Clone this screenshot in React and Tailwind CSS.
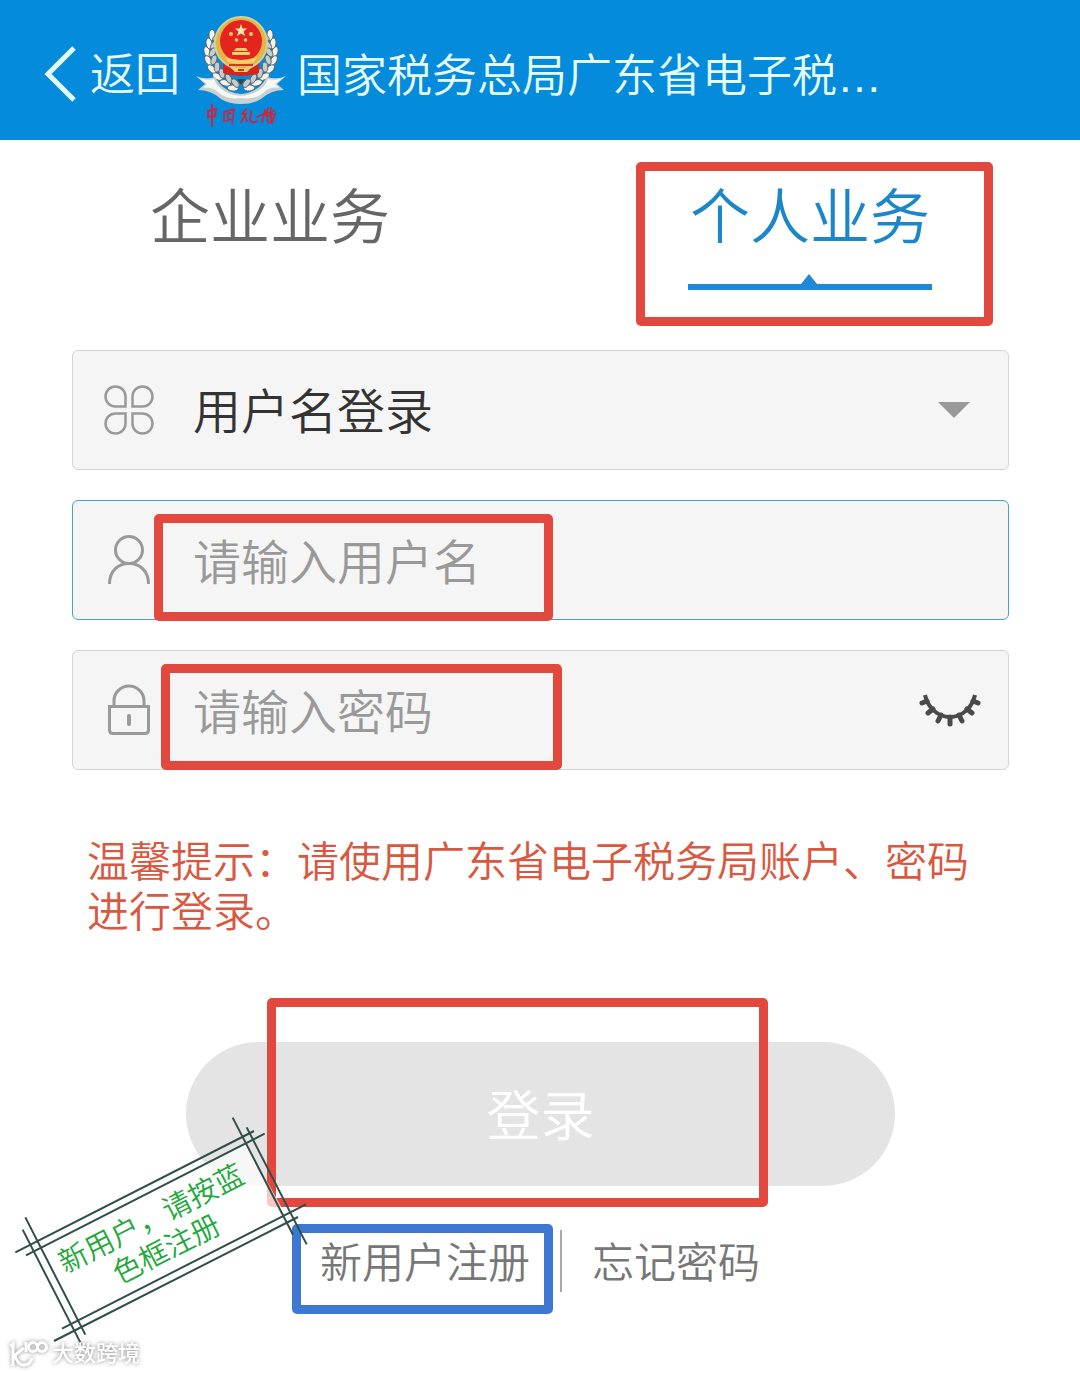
import React, { useState } from 'react';

// highlight frame drawn over the control it points at
function Mark({ className }) {
  return <span aria-hidden="true" className={`pointer-events-none absolute rounded-[5px] border-[9px] ${className}`} />;
}

const LEAVES = [
  [20, 20, 25], [17, 28, 14], [15, 36, 4], [16, 44, -8], [19, 52, -22], [24, 59, -36], [31, 65, -50], [38, 70, -62],
];

function Emblem() {
  return (
    <svg viewBox="0 0 92 116" className="h-[116px] w-[92px] shrink-0" role="img" aria-label="中国税务">
      {[false, true].map((flip) => (
        <g key={String(flip)} transform={flip ? 'translate(92 0) scale(-1 1)' : undefined}>
          {LEAVES.map(([x, y, r]) => (
            <g key={y} transform={`translate(${x} ${y}) rotate(${r})`} stroke="#4e5b63" strokeWidth="0.8">
              <ellipse cx="-3" rx="3" ry="5.5" fill="#f4f4ee" transform="rotate(-24)" />
              <ellipse cx="3" rx="2.8" ry="5" fill="#c8ccc9" transform="rotate(24)" />
            </g>
          ))}
          <path
            d="M1 61 Q10 65 20 62 L24 68 Q32 78 46 79 V89 Q34 89 26 84 Q16 75 3 75 L10 69 Z"
            fill="#c9d0d0"
          />
          <path d="M4 63 Q12 66 19 64 L22 70 Q31 80 46 81 V83 Q32 85 24 78 Q16 71 8 73 L12 69 Z" fill="#f6f8f6" />
        </g>
      ))}
      <path d="M28 46 H64 V58 Q46 64 28 58 Z" fill="#d8241c" />
      <circle cx="46" cy="28" r="26" fill="#e4b445" stroke="#d3cf9e" strokeWidth="2" />
      <circle cx="46" cy="26" r="21" fill="#e4241f" />
      <path d="M46 9 L47.500 13.500 H52 L48.500 16.500 L50 21 L46 18.500 L42 21 L43.500 16.500 L40 13.500 H44.500 Z" fill="#fbe9b0" />
      <g fill="#f6cf6a">
        <circle cx="36" cy="19" r="2" />
        <circle cx="56" cy="19" r="2" />
        <circle cx="41.500" cy="25" r="1.800" />
        <circle cx="50.500" cy="25" r="1.800" />
        <path d="M41 33 H51 L53 36 H39 Z M37 37 H55 V40 H37 Z M30 42 Q46 48 62 42 L59 47 Q46 51 33 47 Z" />
        <path d="M36 53 H56 L52 57 H40 Z" />
      </g>
      <path d="M34 50 L58 50 M43 55 H49" stroke="#c93c1e" strokeWidth="2" />
      <path d="M42 64 L46 70 L50 64 Z" fill="#34464f" />
      <g fill="none" stroke="#cf2439" strokeWidth="2" strokeLinecap="round">
        <path d="M13 96 L21 94 L20 101 L13 102 Z M17 90 V111" />
        <path d="M29 97 V107 M29 97 L39 94 L37 109 M32 99 L36 98 M33 98 V105 M31 106 L37 104" strokeWidth="1.600" />
        <path d="M51 94 L47 99 L51 99 L46 107 M50 101 L52 106 M56 96 L55 105 Q57 109 62 106" strokeWidth="1.800" />
        <path d="M62 102 L68 99 M70 95 L67 107 M73 93 L71 99 L79 96 M72 101 L80 99 L77 108 L73 107 Z M76 93 V106" strokeWidth="1.800" />
      </g>
    </svg>
  );
}

function CloverIcon() {
  return (
    <svg viewBox="0 0 50 50" className="size-[50px]" fill="none" stroke="#999" strokeWidth="2.500" aria-hidden="true">
      {[0, 90, 180, 270].map((a) => (
        <path key={a} transform={`rotate(${a} 25 25)`} d="M21.500 21.500 H11.500 A10 10 0 1 1 21.500 11.500 Z" />
      ))}
    </svg>
  );
}

function UserIcon() {
  return (
    <svg viewBox="0 0 50 50" className="size-[50px]" fill="none" stroke="#999" strokeWidth="3" aria-hidden="true">
      <circle cx="25" cy="15" r="13.500" />
      <path d="M5.500 49 C5.500 36 14 28.500 25 28.500 C36 28.500 44.500 36 44.500 49" />
    </svg>
  );
}

function LockIcon() {
  return (
    <svg viewBox="0 0 50 52" className="h-[52px] w-[50px]" fill="none" stroke="#999" strokeWidth="3" aria-hidden="true">
      <path d="M10 22 V17 A15 15 0 0 1 40 17 V22" />
      <path d="M5.500 22.500 H44.500 V46 Q44.500 49.500 41 49.500 H9 Q5.500 49.500 5.500 46 Z" />
      <path d="M25 32 V40" strokeWidth="4" strokeLinecap="round" />
    </svg>
  );
}

function ClosedEyeIcon() {
  return (
    <svg viewBox="0 0 62 34" className="h-[34px] w-[62px]" fill="none" stroke="#4a4a4a" strokeWidth="4" aria-hidden="true">
      <path d="M6 2 C9 15 19 24 31 24 C43 24 53 15 56 2" />
      <path
        d="M8 8 L3 10 M14 16 L9 20 M22 22 L19 28 M31 24 V31 M40 22 L43 28 M48 16 L53 20 M54 8 L59 10"
        strokeWidth="5"
        strokeLinecap="round"
      />
    </svg>
  );
}

function Stamp() {
  return (
    <div className="pointer-events-none absolute bottom-0 left-0 h-[273px] w-[330px]">
      <svg viewBox="0 0 990 819" className="absolute inset-0 size-full" aria-hidden="true">
        <path d="M120 447 L738 130 L856 343 L232 663 Z" fill="#fff" fillOpacity="0.700" />
        <path
          d="M46 457 L762 93 M78 466 L794 101 M186 686 L918 313 M162 723 L894 351 M76 352 L256 704 M68 389 L247 739 M698 53 L879 404 M740 82 L920 433"
          stroke="#2f4f48"
          strokeWidth="6"
        />
      </svg>
      <p className="absolute top-[100px] left-[55px] w-[208px] -rotate-27 text-center text-[29px] leading-[34px] text-[#22a83c]">
        新用户，请按蓝色框注册
      </p>
    </div>
  );
}

function Watermark() {
  return (
    <div className="pointer-events-none absolute bottom-[4px] left-[8px] flex items-center gap-[2px] text-white drop-shadow-[0_0_2px_#888]">
      <svg viewBox="0 0 42 30" className="h-[30px] w-[42px]" fill="none" stroke="currentColor" strokeWidth="3" aria-hidden="true">
        <path d="M2 7 L5 5 V27 M16 9 L7 16 Q9 26 16 26 Q22 26 24 19" />
        <path d="M18 3 V13" />
        <circle cx="25" cy="8" r="4.500" />
        <circle cx="34" cy="8" r="4.500" />
      </svg>
      <span className="text-[22px] leading-[30px] font-medium">大数跨境</span>
    </div>
  );
}

const FIELD = 'relative flex h-[120px] items-center rounded-md border bg-[#f5f5f5] pl-[31px]';
const INPUT = 'h-full min-w-0 flex-1 bg-transparent pt-[6px] pl-[39px] text-[48px] text-[#333] outline-none placeholder:text-[#999]';

export default function App() {
  const [username, setUsername] = useState('');
  const [password, setPassword] = useState('');
  const [visible, setVisible] = useState(false);

  return (
    <div className="relative min-h-screen overflow-hidden bg-white font-['Liberation_Sans','Noto_Sans_CJK_SC',sans-serif] font-[350]">
      <header className="flex h-[140px] items-center bg-[#058bdb] pl-[44px] text-[45px] leading-[60px] text-[#e6fbff]">
        <button type="button" className="flex items-center gap-[14px] pt-[8px]">
          <svg viewBox="0 0 32 56" className="h-[56px] w-[32px]" fill="none" stroke="currentColor" strokeWidth="5" aria-hidden="true">
            <path d="M30 2 L4 28 L30 54" />
          </svg>
          <span className="pt-[4px]">返回</span>
        </button>
        <div className="ml-[15px] pt-[6px]">
          <Emblem />
        </div>
        <h1 className="ml-[10px] pt-[13px] whitespace-nowrap">国家税务总局广东省电子税…</h1>
      </header>

      <nav className="grid h-[210px] grid-cols-2 text-[60px] leading-[80px]">
        <button type="button" className="flex justify-center pt-[39px] text-[#666]">企业业务</button>
        <button type="button" className="relative flex justify-center pt-[39px] text-[#1b87c9]">
          <span>个人业务</span>
          <svg viewBox="0 0 244 16" className="absolute top-[134px] h-[16px] w-[244px]" fill="#1f88d8" aria-hidden="true">
            <path d="M0 10 H113 L121 0 L129 10 H244 V16 H0 Z" />
          </svg>
          <Mark className="top-[22px] left-1/2 -ml-[174px] h-[164px] w-[357px] border-[#e2483d]" />
        </button>
      </nav>

      <form className="pr-[71px] pl-[72px]" onSubmit={(e) => e.preventDefault()}>
        <div className="flex flex-col gap-[30px]">
          <div className={`${FIELD} border-[#d4d4d4]`}>
            <CloverIcon />
            <select
              aria-label="登录方式"
              className="h-full min-w-0 flex-1 appearance-none bg-transparent pt-[6px] pl-[39px] text-[48px] text-[#333] outline-none"
            >
              <option>用户名登录</option>
            </select>
            <svg viewBox="0 0 32 16" className="pointer-events-none absolute right-[38px] h-[16px] w-[32px]" fill="#999" aria-hidden="true">
              <path d="M0 0 H32 L16 16 Z" />
            </svg>
          </div>

          <div className={`${FIELD} border-[#4a9fc9]`}>
            <UserIcon />
            <input
              type="text"
              aria-label="用户名"
              placeholder="请输入用户名"
              value={username}
              onChange={(e) => setUsername(e.target.value)}
              className={INPUT}
            />
            <Mark className="top-[13px] left-[81px] h-[107px] w-[399px] border-[#e2483d]" />
          </div>

          <div className={`${FIELD} border-[#d4d4d4]`}>
            <LockIcon />
            <input
              type={visible ? 'text' : 'password'}
              aria-label="密码"
              placeholder="请输入密码"
              value={password}
              onChange={(e) => setPassword(e.target.value)}
              className={INPUT}
            />
            <button type="button" aria-label="显示密码" className="mr-[27px]" onClick={() => setVisible(!visible)}>
              <ClosedEyeIcon />
            </button>
            <Mark className="top-[13px] left-[88px] h-[106px] w-[401px] border-[#e2483d]" />
          </div>
        </div>

        <p className="mt-[68px] px-[15px] text-[42px] leading-[50px] text-[#d9583f]">
          温馨提示：请使用广东省电子税务局账户、密码进行登录。
        </p>

        <div className="relative mx-[114px] mt-[104px]">
          <button type="submit" className="h-[144px] w-full rounded-full bg-[#e4e4e4] pt-[7px] text-[54px] text-white">
            登录
          </button>
          <Mark className="-top-[44px] left-[81px] h-[209px] w-[501px] border-[#e2483d]" />
        </div>
      </form>

      <div className="mt-[44px] flex h-[62px] justify-center text-[42px] leading-[68px] text-[#777]">
        <a href="#register" className="relative pr-[30px]">
          新用户注册
          <Mark className="-top-[6px] -left-[28px] h-[90px] w-[261px] border-[#3f78d3]" />
        </a>
        <a href="#forgot" className="border-l-2 border-[#aaa] pl-[30px]">忘记密码</a>
      </div>

      <Stamp />
      <Watermark />
    </div>
  );
}
